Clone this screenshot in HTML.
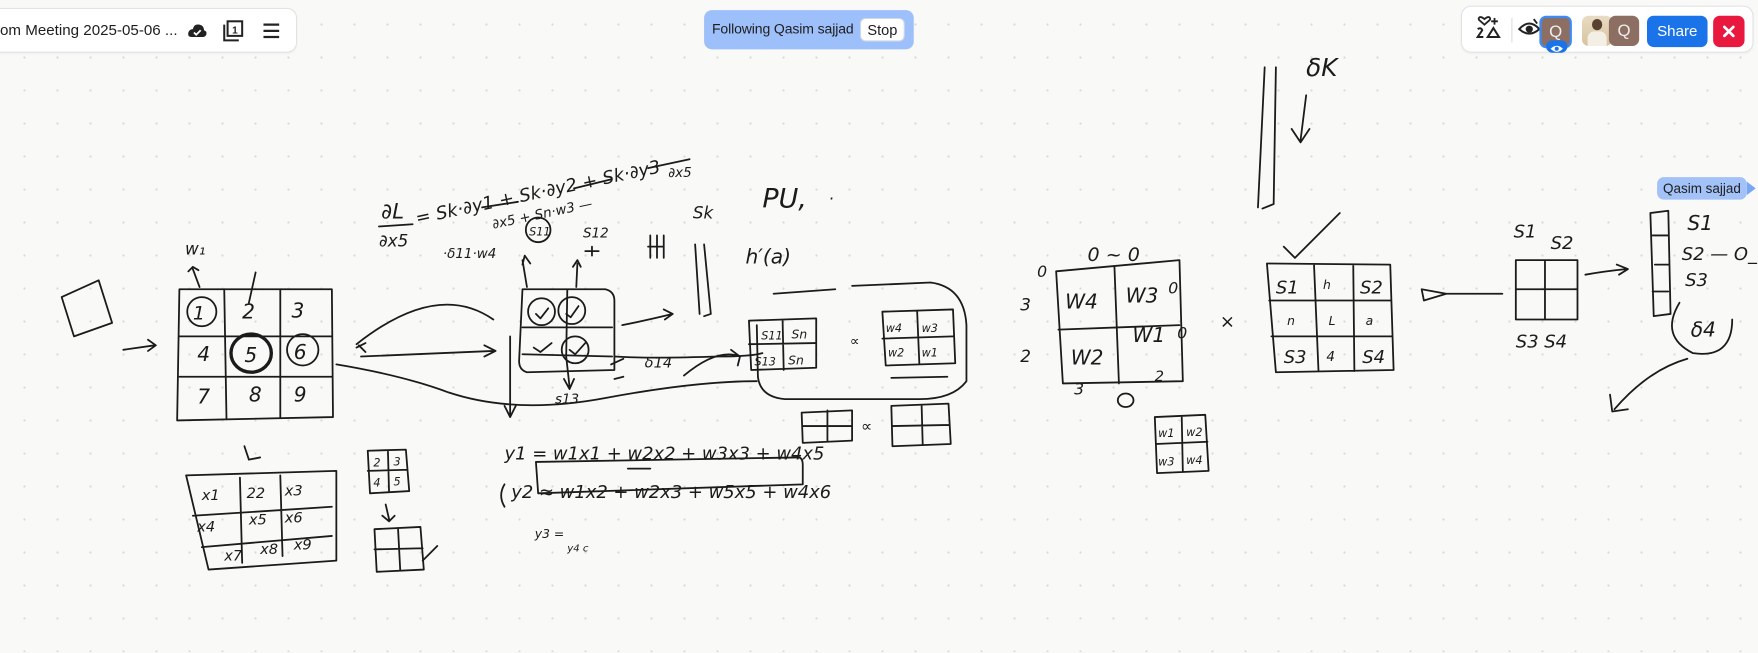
<!DOCTYPE html>
<html><head><meta charset="utf-8"><style>
html,body{margin:0;padding:0;width:1758px;height:652px;overflow:hidden;background:#f9f9f7;font-family:"Liberation Sans",sans-serif;}
#bg{position:absolute;inset:0;background-image:radial-gradient(circle,#dadad8 1px,transparent 1.3px);background-size:33px 33px;background-position:8px 8px;}
#s{position:absolute;left:0;top:0;width:1568px;height:582px;transform:scale(1.12117);transform-origin:0 0;}
.p{position:absolute;background:#fff;border-radius:8px;box-shadow:0 0 0 1px #e3e3e3,0 1px 3px rgba(0,0,0,.08);}
svg.d{position:absolute;left:0;top:0}
svg.d path,svg.d rect,svg.d ellipse,svg.d line{fill:none;stroke:#1b1b1b;stroke-width:1.6;stroke-linecap:round;stroke-linejoin:round}
svg.d text{font-family:"DejaVu Sans","Liberation Sans",sans-serif;fill:#1b1b1b;font-style:italic;font-weight:300}
</style></head><body>
<div id="bg"></div>
<div id="s">
<svg class="d" width="1568" height="582" viewBox="0 0 1568 582">
<path d="M55 265 L88 250 L100 288 L66 300 Z"/><path d="M110 312 L138 308 M132 303 L139 308 L132 313"/>
<path d="M160 258 L296 258 L297 372 L158 375 Z"/>
<path d="M160 300 L296 300 M160 336 L296 336 M200 258 L202 373 M250 258 L250 372"/>
<ellipse cx="180" cy="278" rx="13" ry="13"/><ellipse cx="224" cy="315" rx="18" ry="17" style="stroke-width:3"/><ellipse cx="270" cy="312" rx="14" ry="14"/>
<text x="172" y="285" font-size="17">1</text><text x="216" y="284" font-size="18">2</text><text x="260" y="283" font-size="18">3</text>
<text x="176" y="322" font-size="18">4</text><text x="218" y="323" font-size="18">5</text><text x="262" y="320" font-size="18">6</text>
<text x="176" y="360" font-size="18">7</text><text x="222" y="358" font-size="18">8</text><text x="262" y="358" font-size="18">9</text>
<text x="165" y="227" font-size="15">w₁</text><path d="M172 240 L178 256 M168 242 L172 238 L177 241 M228 243 L222 270"/>
<path d="M218 398 L222 410 L232 408"/>
<path d="M166 424 L300 420 L300 500 L186 508 Z M172 460 L296 452 M180 488 L296 478 M214 426 L216 502 M250 424 L252 496"/>
<text x="180" y="446" font-size="13">x1</text><text x="220" y="444" font-size="13">22</text><text x="254" y="442" font-size="13">x3</text>
<text x="176" y="474" font-size="13">x4</text><text x="222" y="468" font-size="13">x5</text><text x="254" y="466" font-size="13">x6</text>
<text x="200" y="500" font-size="13">x7</text><text x="232" y="494" font-size="13">x8</text><text x="262" y="490" font-size="13">x9</text>
<path d="M328 402 L362 401 L365 438 L330 440 Z M328 420 L363 419 M346 402 L347 439"/>
<text x="333" y="416" font-size="10">2</text><text x="351" y="415" font-size="10">3</text><text x="333" y="434" font-size="10">4</text><text x="351" y="433" font-size="10">5</text>
<path d="M344 450 L347 463 M341 460 L347 465 L352 460"/>
<path d="M334 472 L375 470 L378 508 L336 510 Z M334 490 L377 489 M355 471 L357 509 M377 500 L390 487"/>
<text x="340" y="195" font-size="19">∂L</text><path d="M338 202 L368 200"/><text x="338" y="220" font-size="15">∂x5</text>
<text x="372" y="200" font-size="16" transform="rotate(-12 372 200)">= Sk·∂y1 + Sk·∂y2 + Sk·∂y3</text>
<path d="M430 185 L462 180 M512 168 L545 160 M578 150 L615 142"/>
<text x="440" y="204" font-size="12" transform="rotate(-12 440 204)">∂x5 + Sn·w3 —</text>
<text x="596" y="158" font-size="12">∂x5</text>
<text x="395" y="230" font-size="12">·δ11·w4</text>
<ellipse cx="480" cy="205" rx="11" ry="11"/><text x="472" y="210" font-size="10">S11</text>
<text x="520" y="212" font-size="12">S12</text><path d="M528 220 L528 228 M522 224 L534 224"/>
<path d="M580 210 L580 230 M578 220 L592 220 M592 210 L592 230 M586 210 L586 230"/>
<text x="618" y="195" font-size="15">Sk</text><path d="M620 218 L624 280 M628 218 L634 280 L628 282"/>
<text x="680" y="185" font-size="24">PU,</text><text x="740" y="178" font-size="14">.</text>
<text x="665" y="235" font-size="18">h′(a)</text>
<path d="M466 258 L540 258 Q548 260 548 268 L548 330 L470 332 Q463 330 463 322 Z M466 292 L546 292 M466 316 L546 318 M506 258 L505 318"/>
<ellipse cx="483" cy="278" rx="12" ry="12"/><ellipse cx="510" cy="277" rx="12" ry="12"/><ellipse cx="513" cy="312" rx="12" ry="12"/>
<path d="M478 280 L482 284 L489 275 M505 280 L509 283 L516 273 M476 310 L482 314 L492 306 M508 312 L513 316 L522 306"/>
<path d="M466 232 L470 256 M466 236 L468 228 L473 235 M515 235 L514 256 M511 238 L515 232 L518 238"/>
<path d="M455 300 L455 370 M450 362 L455 372 L460 362 M505 318 L508 345 M503 338 L508 347 L512 338"/>
<text x="495" y="360" font-size="12">s13</text>
<path d="M555 290 Q580 285 600 280 M592 276 L600 280 L593 285"/>
<text x="575" y="328" font-size="13">δ14</text>
<path d="M545 325 L556 320 M548 338 L556 336"/>
<path d="M610 335 Q640 310 660 318 M652 312 L660 318 L658 326"/>
<path d="M318 307 Q390 250 440 285 M318 310 L326 306 M320 308 L326 314"/>
<path d="M322 318 L440 313 M432 308 L442 313 L432 318"/>
<path d="M300 325 Q360 335 400 350 Q460 370 540 355 Q620 340 675 340"/>
<path d="M548 318 Q580 320 640 318 Q670 318 680 315"/>
<path d="M690 262 L745 258 M760 255 L830 252 Q860 256 862 290 L862 340 Q850 356 820 356 L700 356 Q678 354 676 336 L675 290"/>
<path d="M668 286 L728 284 L728 328 L670 330 Z M668 307 L727 306 M698 285 L699 330"/>
<text x="679" y="303" font-size="10">S11</text><text x="706" y="302" font-size="11">Sn</text><text x="673" y="326" font-size="10">S13</text><text x="703" y="325" font-size="11">Sn</text>
<text x="758" y="308" font-size="12">∝</text>
<path d="M787 278 L850 276 L852 324 L790 326 Z M787 302 L850 300 M818 277 L820 325"/>
<text x="790" y="296" font-size="10">w4</text><text x="822" y="296" font-size="10">w3</text><text x="792" y="318" font-size="10">w2</text><text x="822" y="318" font-size="10">w1</text>
<path d="M795 337 L845 336"/>
<text x="450" y="410" font-size="16">y1 = w1x1 + w2x2 + w3x3 + w4x5</text>
<path d="M560 418 L580 418"/>
<path d="M450 432 Q444 442 450 452"/>
<text x="456" y="444" font-size="16">y2 ≈ w1x2 + w2x3 + w5x5 + w4x6</text>
<path d="M478 412 L712 408 Q716 408 716 415 L716 432 L480 440 Z"/>
<text x="477" y="480" font-size="11">y3 =</text><text x="506" y="492" font-size="9">y4 c</text>
<path d="M715 368 L760 366 L760 393 L716 395 Z M716 380 L760 380 M738 366 L738 394"/>
<text x="768" y="385" font-size="14">∝</text>
<path d="M795 362 L846 360 L848 396 L796 398 Z M796 380 L847 379 M822 361 L823 397"/>
<path d="M942 242 L1052 232 L1055 340 L948 342 Z M944 294 L1052 290 M994 238 L998 342"/>
<text x="950" y="275" font-size="18">W4</text><text x="1004" y="270" font-size="18">W3</text>
<text x="955" y="325" font-size="18">W2</text><text x="1010" y="305" font-size="18">W1</text>
<text x="925" y="247" font-size="14">0</text><text x="970" y="233" font-size="17">0 ~ 0</text><text x="1042" y="262" font-size="14">0</text>
<text x="910" y="277" font-size="15">3</text><text x="910" y="323" font-size="15">2</text><text x="1050" y="302" font-size="14">0</text>
<text x="958" y="352" font-size="14">3</text><ellipse cx="1004" cy="357" rx="7" ry="6"/><text x="1030" y="340" font-size="13">2</text>
<path d="M1030 372 L1075 370 L1078 420 L1032 422 Z M1031 396 L1077 394 M1054 371 L1055 421"/>
<text x="1033" y="390" font-size="10">w1</text><text x="1058" y="389" font-size="10">w2</text><text x="1033" y="415" font-size="10">w3</text><text x="1058" y="414" font-size="10">w4</text>
<text x="1088" y="292" font-size="16">×</text>
<path d="M1128 60 L1122 185 M1138 60 L1136 182 L1126 186"/>
<text x="1165" y="68" font-size="22">δK</text>
<path d="M1165 85 L1160 125 M1152 115 L1160 127 L1168 115"/>
<path d="M1145 220 L1155 230 L1195 190"/>
<path d="M1130 235 L1240 236 L1243 330 L1138 332 Z M1132 268 L1240 268 M1134 300 L1241 300 M1172 236 L1176 331 M1207 236 L1208 331"/>
<text x="1138" y="262" font-size="16">S1</text><text x="1180" y="258" font-size="11">h</text><text x="1213" y="262" font-size="16">S2</text>
<text x="1148" y="290" font-size="11">n</text><text x="1185" y="290" font-size="11">L</text><text x="1218" y="290" font-size="11">a</text>
<text x="1145" y="324" font-size="16">S3</text><text x="1183" y="322" font-size="12">4</text><text x="1215" y="324" font-size="16">S4</text>
<path d="M1268 258 L1290 262 L1270 268 Z M1290 262 L1340 262"/>
<text x="1350" y="212" font-size="16">S1</text><text x="1383" y="222" font-size="16">S2</text>
<path d="M1352 232 L1407 232 L1407 285 L1352 285 Z M1352 258 L1407 258 M1378 232 L1378 285"/>
<text x="1352" y="310" font-size="16">S3 S4</text>
<path d="M1414 245 Q1430 242 1450 240 M1442 236 L1452 240 L1444 245"/>
<path d="M1472 190 L1488 188 L1490 280 L1475 282 Z M1474 210 L1488 210 M1474 260 L1488 260 M1476 236 L1488 236"/>
<text x="1505" y="205" font-size="18">S1</text><text x="1500" y="232" font-size="16">S2 — O_</text><text x="1503" y="255" font-size="16">S3</text>
<path d="M1498 270 Q1480 300 1510 315 Q1545 320 1545 285"/><text x="1508" y="300" font-size="18">δ4</text>
<path d="M1505 320 Q1470 330 1440 365 M1436 352 L1438 367 L1452 365"/>
</svg>

<div class="p" style="left:-10px;top:8px;width:274px;height:38px;">
<div style="position:absolute;left:10px;top:11px;font-size:13.5px;color:#1e1e1e;">om Meeting 2025-05-06 ...</div>
<svg style="position:absolute;left:177px;top:10px" width="18" height="18" viewBox="0 0 18 18"><path d="M4 15 Q0 15 1 11 Q2 8 5 8 Q6 3 11 4 Q15 5 15 9 Q18 10 17 13 Q16 15 14 15 Z" fill="#222"/><path d="M6 11 L8 13 L12 9" stroke="#fff" stroke-width="1.6" fill="none"/></svg>
<svg style="position:absolute;left:207px;top:9px" width="22" height="22" viewBox="0 0 22 22"><rect x="6" y="2" width="13" height="13" fill="none" stroke="#222" stroke-width="1.8"/><path d="M3 5 L3 19 L16 19" fill="none" stroke="#222" stroke-width="1.8"/><text x="10" y="13" font-size="9" font-weight="bold" fill="#222" font-family="Liberation Sans">1</text></svg>
<svg style="position:absolute;left:244px;top:12px" width="16" height="15" viewBox="0 0 16 15"><path d="M1 2H15M1 7.5H15M1 13H15" stroke="#222" stroke-width="2"/></svg>
</div>

<div style="position:absolute;left:628px;top:9px;width:187px;height:35px;background:#9dbffa;border-radius:7px;">
<div style="position:absolute;left:7px;top:10px;font-size:12.5px;color:#1e1e1e;letter-spacing:-0.1px;">Following Qasim sajjad</div>
<div style="position:absolute;left:139px;top:7px;width:40px;height:21px;background:#fff;border-radius:5px;border:1px solid #cfd8e8;box-sizing:border-box;font-size:13px;text-align:center;line-height:19px;color:#1e1e1e;">Stop</div>
</div>

<div class="p" style="left:1304px;top:6px;width:259px;height:40px;">
<svg style="position:absolute;left:12px;top:8px" width="24" height="22" viewBox="0 0 24 22"><path d="M8 8 L4 4.5 Q2 3 3.5 1.5 Q5 0.5 8 3 Q11 0.5 12.5 1.5 Q14 3 12 4.5 Z" fill="none" stroke="#222" stroke-width="1.6"/><path d="M17 2V8M14 5H20" stroke="#222" stroke-width="1.6"/><path d="M2 12 Q5 10 6 13 L2 19 L7 19" fill="none" stroke="#222" stroke-width="1.8"/><path d="M16 11 L21 19 L11 19 Z" fill="none" stroke="#222" stroke-width="1.8"/></svg>
<div style="position:absolute;left:44px;top:10px;width:1px;height:22px;background:#ddd"></div>
<svg style="position:absolute;left:50px;top:9px" width="20" height="20" viewBox="0 0 20 20"><path d="M1 11 Q10 1 19 11 Q10 19 1 11Z" fill="none" stroke="#222" stroke-width="1.8"/><circle cx="10" cy="11" r="3.2" fill="#222"/><path d="M14 2 L17 6" stroke="#222" stroke-width="1.6"/></svg>
<div style="position:absolute;left:69px;top:8px;width:29px;height:29px;border-radius:6px;border:2px solid #3d8bf2;box-sizing:border-box;background:#8d6e63;color:#eee;font-size:15px;text-align:center;line-height:25px;">Q</div>
<div style="position:absolute;left:75px;top:30px;width:19px;height:11px;border-radius:6px;background:#1a73e8;"><svg width="19" height="11" viewBox="0 0 19 11"><path d="M4 5.5 Q9.5 0 15 5.5 Q9.5 11 4 5.5Z" fill="#fff"/><circle cx="9.5" cy="5.5" r="1.8" fill="#1a73e8"/></svg></div>
<div style="position:absolute;left:107px;top:8px;width:27px;height:27px;border-radius:6px;background:linear-gradient(#e9dcc4,#d7c3a0);"><div style="position:absolute;left:9px;top:3px;width:9px;height:10px;border-radius:5px;background:#5a4030"></div><div style="position:absolute;left:5px;top:14px;width:17px;height:13px;border-radius:6px 6px 0 0;background:#f3efe4"></div></div>
<div style="position:absolute;left:131px;top:8px;width:27px;height:27px;border-radius:6px;background:#8d6e63;color:#eee;font-size:15px;text-align:center;line-height:27px;">Q</div>
<div style="position:absolute;left:165px;top:8px;width:54px;height:28px;border-radius:6px;background:#1a73e8;color:#fff;font-size:13.5px;text-align:center;line-height:28px;">Share</div>
<div style="position:absolute;left:224px;top:8px;width:28px;height:28px;border-radius:6px;background:#e8183f;"><svg width="28" height="28" viewBox="0 0 28 28"><path d="M10 10L18 18M18 10L10 18" stroke="#fff" stroke-width="2.4" stroke-linecap="round"/></svg></div>
</div>

<div style="position:absolute;left:1478px;top:158px;width:80px;height:20px;background:#a3c2f8;border-radius:6px;font-size:12px;line-height:20px;text-align:center;color:#1e1e1e;">Qasim sajjad</div>
<svg style="position:absolute;left:1558px;top:162px" width="10" height="12"><path d="M0 0 L8 6 L0 12Z" fill="#7aa7f5"/></svg>
</div>
</body></html>
